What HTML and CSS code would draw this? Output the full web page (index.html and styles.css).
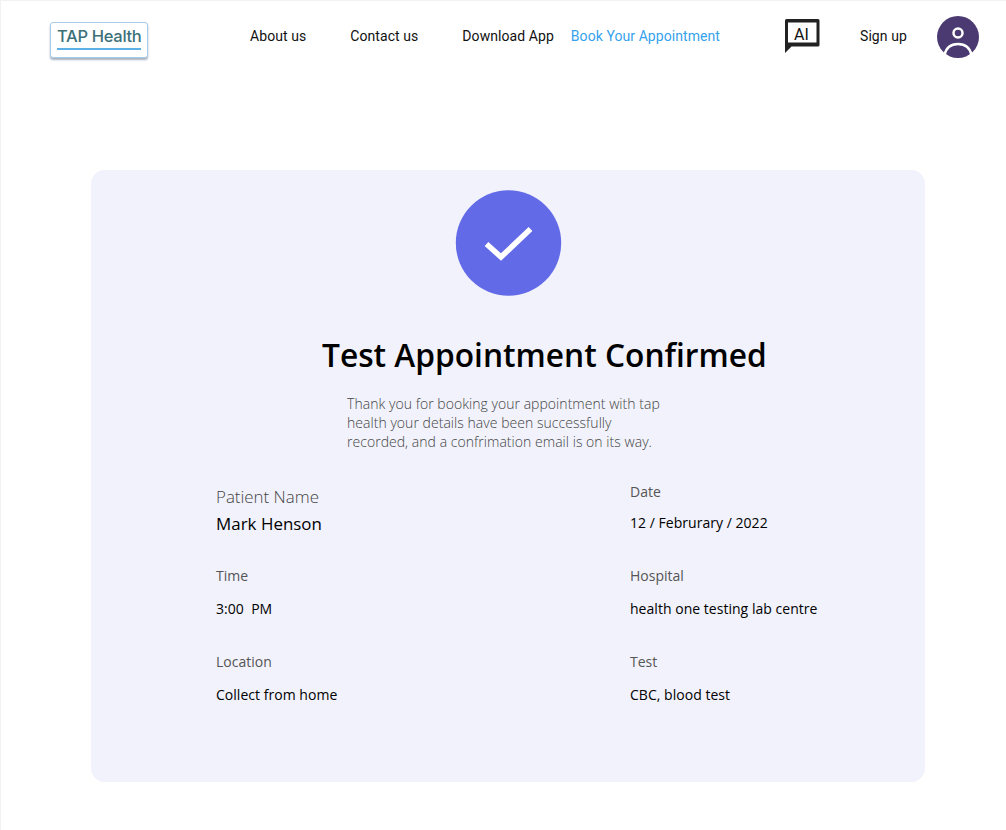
FILE: index.html
```html
<html>
<head>
    <title>TAP Health</title>
    <link rel="stylesheet" href="styles.css">
</head>
<body>
    <div class="page">
        <div class="topbar">
            <div class="logo"><span class="logo-text">TAP Health</span></div>
            <div class="nav">
                <a class="nav-link">About us</a>
                <a class="nav-link">Contact us</a>
                <a class="nav-link">Download App</a>
                <a class="nav-link active">Book Your Appointment</a>
            </div>
            <div class="ai-icon">
                <svg width="36" height="36" viewBox="0 0 36 36">
                    <path d="M2.5 1 H34 a1.5 1.5 0 0 1 1.5 1.5 V27 a1.5 1.5 0 0 1 -1.5 1.5 H7.5 L1 35 V2.5 a1.5 1.5 0 0 1 1.5 -1.5 Z M4 4.5 V24.5 H32.5 V4.5 Z" fill="#222222" fill-rule="evenodd"/>
                </svg>
                <span class="ai-text">AI</span>
            </div>
            <a class="nav-link signup">Sign up</a>
            <div class="avatar">
                <svg width="42" height="42" viewBox="0 0 42 42">
                    <circle cx="21" cy="21" r="21" fill="#4b3a72"/>
                    <circle cx="21" cy="17" r="4.5" fill="none" stroke="#fff" stroke-width="2.5"/>
                    <path d="M7.5 39 C9 32 14 28 21 28 C28 28 33 32 34.5 39" fill="none" stroke="#fff" stroke-width="2.5"/>
                </svg>
            </div>
        </div>

        <div class="card">
            <div class="check">
                <svg width="107" height="106" viewBox="0 0 107 106">
                    <circle cx="53.5" cy="53" r="52.7" fill="#626ae8"/>
                    <path d="M31.5 54 L46 67 L75.5 39" fill="none" stroke="#fff" stroke-width="5.5"/>
                </svg>
            </div>
            <h1 class="title">Test Appointment Confirmed</h1>
            <p class="thanks">Thank you for booking your appointment with tap<br>health your details have been successfully<br>recorded, and a confrimation email is on its way.</p>
            <div class="details">
                <div class="item first">
                    <div class="label big">Patient Name</div>
                    <div class="value big">Mark Henson</div>
                </div>
                <div class="item first">
                    <div class="label">Date</div>
                    <div class="value">12 / Februrary / 2022</div>
                </div>
                <div class="item">
                    <div class="label">Time</div>
                    <div class="value">3:00 &nbsp;PM</div>
                </div>
                <div class="item">
                    <div class="label">Hospital</div>
                    <div class="value">health one testing lab centre</div>
                </div>
                <div class="item">
                    <div class="label">Location</div>
                    <div class="value">Collect from home</div>
                </div>
                <div class="item">
                    <div class="label">Test</div>
                    <div class="value">CBC, blood test</div>
                </div>
            </div>
        </div>
    </div>
</body>
</html>
```

FILE: styles.css
```css
body {
    margin: 0;
    background-color: #ffffff;
    font-family: "Open Sans", sans-serif;
}
.page {
    height: 830px;
    box-sizing: border-box;
    border-top: 1px solid #f2f2f2;
    border-left: 1px solid #f2f2f2;
    overflow: hidden;
}
.topbar {
    display: flex;
    align-items: center;
    height: 71px;
    padding-left: 49px;
}
.logo {
    width: 98px;
    height: 36px;
    box-sizing: border-box;
    border: 1px solid #a9cbea;
    border-radius: 3px;
    box-shadow: 0 2px 2px #a8b4c0;
    margin-top: 7px;
    padding: 1px 6px 0;
    background: #fff;
}
.logo-text {
    display: block;
    font-family: "Inter", sans-serif;
    font-size: 16.5px;
    font-weight: 500;
    letter-spacing: -0.3px;
    line-height: 24px;
    height: 24px;
    white-space: nowrap;
    color: #3b7079;
    border-bottom: 2px solid #5cb0e6;
}
.nav {
    display: flex;
    gap: 44px;
    margin-left: 102px;
    margin-bottom: 2px;
    width: 535px;
}
.nav-link {
    font-family: "Roboto", sans-serif;
    font-size: 14px;
    letter-spacing: 0.07px;
    color: #111111;
    white-space: nowrap;
}
.nav .active {
    color: #35a2ec;
    margin-left: -27px;
}
.ai-icon {
    position: relative;
    width: 36px;
    height: 36px;
    margin-top: -1px;
    margin-left: -1px;
}
.ai-icon svg {
    display: block;
}
.ai-text {
    position: absolute;
    left: 10px;
    top: 7px;
    font-family: "Roboto", sans-serif;
    font-size: 16px;
    color: #111111;
}
.signup {
    margin-left: 40px;
    margin-bottom: 2px;
}
.avatar {
    margin-left: 30px;
    height: 42px;
}
.card {
    width: 834px;
    height: 612px;
    box-sizing: border-box;
    margin-top: 98px;
    margin-left: 90px;
    padding-top: 20px;
    background-color: #f1f2fb;
    border-radius: 14px;
}
.check {
    height: 106px;
    margin-left: 364px;
}
.title {
    margin: 39px 0 0 231px;
    font-size: 31.7px;
    font-weight: 600;
    line-height: 40px;
    color: #000000;
}
.thanks {
    margin: 19px 0 0 256px;
    font-size: 14px;
    font-weight: 300;
    letter-spacing: 0.04px;
    line-height: 19px;
    color: #444444;
}
.details {
    display: grid;
    grid-template-columns: 414px 1fr;
    margin: 31px 0 0 125px;
}
.item {
    height: 86px;
}
.item.first {
    height: 84px;
}
.label {
    font-size: 14px;
    line-height: 19px;
    color: #555555;
}
.value {
    margin-top: 14px;
    font-size: 14px;
    letter-spacing: 0.03px;
    line-height: 19px;
    color: #000000;
}
.first .value {
    margin-top: 12px;
}
.label.big {
    font-size: 16.9px;
    font-weight: 300;
    line-height: 22px;
    margin-top: 4px;
    color: #444444;
}
.value.big {
    margin-top: 4px;
    font-size: 16.9px;
    line-height: 23px;
}
```
